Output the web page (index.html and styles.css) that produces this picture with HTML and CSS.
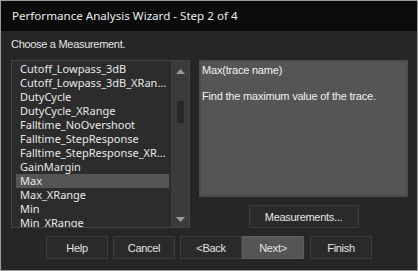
FILE: index.html
```html
<!DOCTYPE html>
<html>
<head>
<meta charset="utf-8">
<link rel="stylesheet" href="styles.css">
</head>
<body>
<div class="window">
  <div class="titlebar">Performance Analysis Wizard - Step 2 of 4</div>
  <div class="content">
    <div class="prompt">Choose a Measurement.</div>
    <div class="main">
      <div class="listbox">
        <div class="items">
          <div class="item">Cutoff_Lowpass_3dB</div>
          <div class="item">Cutoff_Lowpass_3dB_XRan...</div>
          <div class="item">DutyCycle</div>
          <div class="item">DutyCycle_XRange</div>
          <div class="item">Falltime_NoOvershoot</div>
          <div class="item">Falltime_StepResponse</div>
          <div class="item">Falltime_StepResponse_XR...</div>
          <div class="item">GainMargin</div>
          <div class="item selected">Max</div>
          <div class="item">Max_XRange</div>
          <div class="item">Min</div>
          <div class="item">Min_XRange</div>
        </div>
        <div class="scrollbar">
          <svg class="arrow" width="9" height="5" viewBox="0 0 9 5"><path d="M4.5 0 L9 5 L0 5 Z" fill="#9a9a9a"/></svg>
          <div class="thumb"></div>
          <div class="spacer"></div>
          <svg class="arrow" width="9" height="5" viewBox="0 0 9 5"><path d="M0 0 L9 0 L4.5 5 Z" fill="#9a9a9a"/></svg>
        </div>
      </div>
      <div class="side">
        <div class="desc">
          <div>Max(trace name)</div>
          <div>&nbsp;</div>
          <div>Find the maximum value of the trace.</div>
        </div>
        <button class="btn measure">Measurements...</button>
      </div>
    </div>
    <div class="footer">
      <button class="btn">Help</button>
      <button class="btn">Cancel</button>
      <button class="btn back">&lt;Back</button>
      <button class="btn next">Next&gt;</button>
      <button class="btn finish">Finish</button>
    </div>
  </div>
</div>
</body>
</html>
```
FILE: styles.css
```css
html, body {
  margin: 0;
  padding: 0;
  background: #262626;
}
.window {
  width: 418px;
  height: 271px;
  box-sizing: border-box;
  border: 1px solid #9c9c9c;
  background: #262626;
  display: flex;
  flex-direction: column;
  overflow: hidden;
}
.titlebar {
  height: 30px;
  flex: none;
  background: #0b0b0b;
  color: #ececec;
  font-family: "Noto Sans", sans-serif;
  font-size: 11.6px;
  line-height: 30px;
  padding-left: 11px;
}
.content {
  flex: 1;
  display: flex;
  flex-direction: column;
  padding: 0 8px 0 10px;
}
.prompt {
  height: 23px;
  padding-top: 6px;
  line-height: 14px;
  box-sizing: content-box;
  color: #e4e4e4;
  font-family: "Liberation Sans", Arial, sans-serif;
  font-size: 11px;
  letter-spacing: -0.3px;
}
.main {
  display: grid;
  grid-template-columns: 179px 209px;
  column-gap: 9px;
  height: 164px;
}
.listbox {
  border: 1px solid #444444;
  background: #2c2c2c;
  display: flex;
  overflow: hidden;
}
.items {
  flex: 1;
  padding: 1px 2px 0 4px;
  overflow: hidden;
}
.item {
  height: 14px;
  line-height: 14px;
  padding-left: 4px;
  color: #e8e8e8;
  font-family: "Noto Sans", sans-serif;
  font-size: 11px;
  white-space: nowrap;
}
.item.selected {
  background: #555555;
}
.scrollbar {
  width: 18px;
  flex: none;
  background: #3b3b3b;
  display: flex;
  flex-direction: column;
  align-items: center;
  padding: 8px 0 5px;
  box-sizing: border-box;
}
.arrow {
  display: block;
  flex: none;
}
.thumb {
  width: 7px;
  height: 22px;
  margin-top: 27px;
  background: #272727;
}
.spacer {
  flex: 1;
}
.side {
  display: flex;
  flex-direction: column;
  align-items: center;
}
.desc {
  align-self: stretch;
  height: 137px;
  box-sizing: border-box;
  background: #555555;
  border: 2px solid #4c4c4c;
  padding: 2px 1px;
  color: #f0f0f0;
  font-family: "Liberation Sans", Arial, sans-serif;
  font-size: 11px;
  line-height: 13px;
  letter-spacing: -0.2px;
}
.btn {
  height: 23px;
  box-sizing: border-box;
  background: #2a2a2a;
  border: 1px solid #3e3e3e;
  color: #e4e4e4;
  font-family: "Liberation Sans", Arial, sans-serif;
  font-size: 11px;
  letter-spacing: -0.3px;
  padding: 0;
  margin: 0;
}
.measure {
  width: 110px;
  margin-top: 8px;
}
.footer {
  display: flex;
  margin-top: 12px;
  padding-left: 35px;
  gap: 5px;
}
.footer .btn {
  width: 62px;
}
.footer .next {
  margin-left: -5px;
  background: #555555;
  border-color: #5e5e5e;
}
.footer .finish {
  margin-left: 1px;
}
```
